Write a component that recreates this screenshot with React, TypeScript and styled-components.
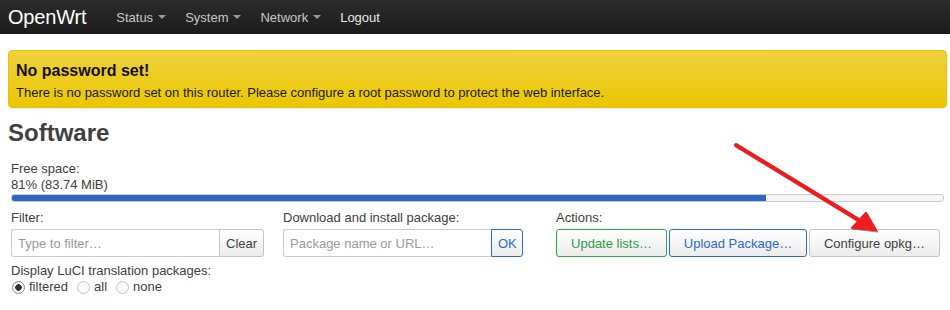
import React from 'react';
import styled, { createGlobalStyle } from 'styled-components';

const GlobalStyle = createGlobalStyle`
    html, body {
        margin: 0;
        padding: 0;
        background: #fff;
        font-family: "Liberation Sans", Arial, sans-serif;
        font-size: 13px;
        color: #404040;
    }
`;

const Page = styled.div`
    position: relative;
    width: 950px;
    height: 310px;
    overflow: hidden;
`;

const NavBar = styled.header`
    height: 34px;
    display: flex;
    align-items: center;
    padding: 0 8px;
    background: linear-gradient(to bottom, #2b2b2b, #1c1c1c);
`;

const Brand = styled.span`
    color: #fff;
    font-size: 20px;
    margin-right: 30px;
    letter-spacing: -0.2px;
`;

const NavItem = styled.span<{ $plain?: boolean }>`
    color: ${(p) => (p.$plain ? '#e8e8e8' : '#c8c8c8')};
    font-size: 13px;
    margin-right: 19px;
    display: flex;
    align-items: center;
`;

const Caret = styled.span`
    display: inline-block;
    margin-left: 5px;
    border-left: 4px solid transparent;
    border-right: 4px solid transparent;
    border-top: 4px solid #9a9a9a;
`;

const Main = styled.main`
    padding: 16px 3px 0 8px;
`;

const Alert = styled.div`
    height: 58px;
    box-sizing: border-box;
    padding: 11px 7px;
    border: 1px solid #e6c300;
    border-radius: 4px;
    background: linear-gradient(to bottom, #eed13e, #ebc700);
    color: #1a1a1a;
    box-shadow: 0 1px 1px rgba(0, 0, 0, 0.08);
`;

const AlertTitle = styled.div`
    font-size: 16px;
    font-weight: bold;
    line-height: 18px;
    margin-bottom: 5px;
    color: #111;
`;

const AlertText = styled.div`
    font-size: 13px;
    line-height: 16px;
`;

const Heading = styled.h2`
    margin: 11px 0 0 0;
    font-size: 24px;
    line-height: 28px;
    font-weight: bold;
    color: #404040;
`;

const Section = styled.section`
    padding: 0 3px;
`;

const Label = styled.div`
    font-size: 13px;
    line-height: 16px;
    color: #404040;
`;

const FreeSpace = styled.div`
    margin-top: 14px;
`;

const Progress = styled.div`
    margin-top: 1px;
    height: 8px;
    box-sizing: border-box;
    border: 1px solid #ccc;
    border-radius: 3px;
    background: #f5f5f5;
    overflow: hidden;
`;

const ProgressFill = styled.div`
    height: 100%;
    background: #2b66c4;
`;

const Controls = styled.div`
    display: flex;
    margin-top: 8px;
`;

const Column = styled.div<{ $width: number }>`
    width: ${(p) => p.$width}px;
    flex: none;
`;

const InputGroup = styled.div`
    display: flex;
    margin-top: 3px;
    height: 28px;
`;

const TextInput = styled.input`
    width: 208px;
    box-sizing: border-box;
    height: 28px;
    border: 1px solid #ccc;
    border-right: none;
    border-radius: 3px 0 0 3px;
    padding: 0 6px;
    font-family: inherit;
    font-size: 13px;
    color: #404040;
    outline: none;
    &::placeholder {
        color: #999;
    }
`;

const tones = {
    neutral: { border: '#c4c4c4', color: '#404040' },
    blue: { border: '#2a6bd0', color: '#2a6bd0' },
    green: { border: '#2eab3f', color: '#2f9e44' },
};

const Button = styled.button<{ $tone: keyof typeof tones; $attached?: boolean; $width?: number }>`
    height: 28px;
    box-sizing: border-box;
    padding: 0 6px;
    ${(p) => (p.$width ? `width: ${p.$width}px;` : '')}
    border: 1px solid ${(p) => tones[p.$tone].border};
    border-radius: ${(p) => (p.$attached ? '0 3px 3px 0' : '3px')};
    background: linear-gradient(to bottom, #ffffff, #ececec);
    color: ${(p) => tones[p.$tone].color};
    font-family: inherit;
    font-size: 13px;
    cursor: pointer;
`;

const ButtonRow = styled.div`
    display: flex;
    gap: 2px;
    margin-top: 3px;
`;

const Translations = styled.div`
    margin-top: 6px;
`;

const RadioRow = styled.div`
    display: flex;
    align-items: center;
    line-height: 16px;
`;

const RadioOption = styled.label`
    display: flex;
    align-items: center;
    margin-right: 8px;
    color: #404040;
`;

const RadioDot = styled.span<{ $checked?: boolean }>`
    width: 13px;
    height: 13px;
    box-sizing: border-box;
    border-radius: 50%;
    border: 1px solid ${(p) => (p.$checked ? '#8a8a8a' : '#c6c6c6')};
    background: ${(p) => (p.$checked ? 'radial-gradient(circle, #333 0 3px, #f7f7f7 3.5px)' : '#fafafa')};
    margin: 0 4px 0 1px;
`;

const Arrow = styled.svg`
    position: absolute;
    left: 0;
    top: 0;
    pointer-events: none;
`;

export default function App() {
    const freePct = 81;
    return (
        <Page>
            <GlobalStyle />
            <NavBar>
                <Brand>OpenWrt</Brand>
                <NavItem>
                    Status<Caret />
                </NavItem>
                <NavItem>
                    System<Caret />
                </NavItem>
                <NavItem>
                    Network<Caret />
                </NavItem>
                <NavItem $plain>Logout</NavItem>
            </NavBar>
            <Main>
                <Alert>
                    <AlertTitle>No password set!</AlertTitle>
                    <AlertText>
                        There is no password set on this router. Please configure a root password to protect the web interface.
                    </AlertText>
                </Alert>
                <Heading>Software</Heading>
                <Section>
                    <FreeSpace>
                        <Label>Free space:</Label>
                        <Label>81% (83.74 MiB)</Label>
                        <Progress>
                            <ProgressFill style={{ width: `${freePct}%` }} />
                        </Progress>
                    </FreeSpace>
                    <Controls>
                        <Column $width={272}>
                            <Label>Filter:</Label>
                            <InputGroup>
                                <TextInput placeholder="Type to filter…" />
                                <Button $tone="neutral" $attached $width={45}>
                                    Clear
                                </Button>
                            </InputGroup>
                            <Translations>
                                <Label>Display LuCI translation packages:</Label>
                                <RadioRow>
                                    <RadioOption>
                                        <RadioDot $checked />
                                        filtered
                                    </RadioOption>
                                    <RadioOption>
                                        <RadioDot />
                                        all
                                    </RadioOption>
                                    <RadioOption>
                                        <RadioDot />
                                        none
                                    </RadioOption>
                                </RadioRow>
                            </Translations>
                        </Column>
                        <Column $width={273}>
                            <Label>Download and install package:</Label>
                            <InputGroup>
                                <TextInput placeholder="Package name or URL…" />
                                <Button $tone="blue" $attached $width={32}>
                                    OK
                                </Button>
                            </InputGroup>
                        </Column>
                        <Column $width={390}>
                            <Label>Actions:</Label>
                            <ButtonRow>
                                <Button $tone="green" $width={111}>
                                    Update lists…
                                </Button>
                                <Button $tone="blue" $width={138}>
                                    Upload Package…
                                </Button>
                                <Button $tone="neutral" $width={131}>
                                    Configure opkg…
                                </Button>
                            </ButtonRow>
                        </Column>
                    </Controls>
                </Section>
            </Main>
            <Arrow width="950" height="310" viewBox="0 0 950 310">
                <defs>
                    <filter id="arrowShadow" x="-10%" y="-10%" width="120%" height="120%">
                        <feDropShadow dx="1" dy="1" stdDeviation="0.6" floodColor="#000" floodOpacity="0.45" />
                    </filter>
                </defs>
                <g filter="url(#arrowShadow)" fill="#ee1c1c" stroke="#ee1c1c">
                    <line x1="736" y1="145" x2="862" y2="222" strokeWidth="4" strokeLinecap="round" />
                    <polygon points="877,231 851,228 866,212" strokeWidth="1" strokeLinejoin="round" />
                </g>
            </Arrow>
        </Page>
    );
}
